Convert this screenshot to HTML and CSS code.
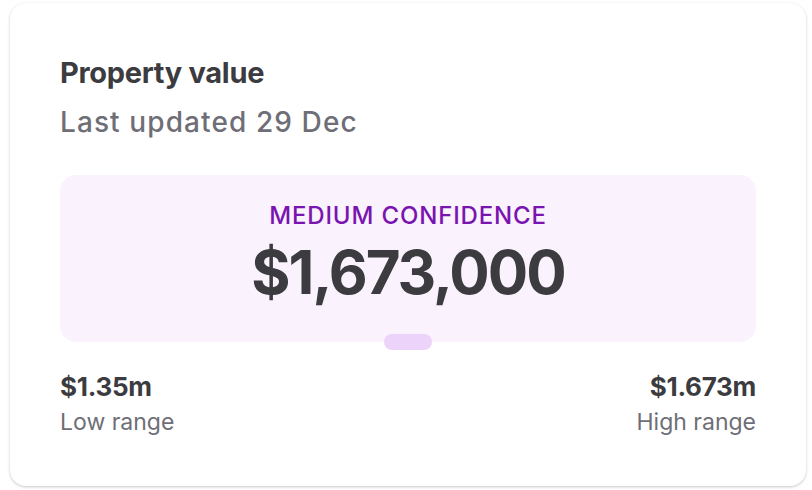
FILE: index.html
```html
<!DOCTYPE html>
<html>
<head>
<meta charset="utf-8">
<link rel="stylesheet" href="styles.css">
</head>
<body>
<div class="card">
  <h1 class="title">Property value</h1>
  <p class="subtitle">Last updated 29 Dec</p>
  <div class="estimate">
    <div class="confidence">MEDIUM CONFIDENCE</div>
    <div class="value">$1,673,000</div>
    <div class="pill"></div>
  </div>
  <div class="ranges">
    <div class="range">
      <div class="range-value">$1.35m</div>
      <div class="range-label">Low range</div>
    </div>
    <div class="range range-right">
      <div class="range-value">$1.673m</div>
      <div class="range-label">High range</div>
    </div>
  </div>
</div>
</body>
</html>
```
FILE: styles.css
```css
* { box-sizing: border-box; }
html, body { margin: 0; padding: 0; background: #ffffff; }
body {
  font-family: Inter, "Noto Sans", sans-serif;
  color: #3b3b40;
  padding: 3px 6px 4px 10px;
}
.card {
  width: 796px;
  height: 483px;
  background: #fff;
  border-radius: 16px;
  box-shadow: 0 1px 3px rgba(0,0,0,0.22);
  padding: 53px 50px 0 50px;
}
.title {
  margin: 0;
  font-size: 29px;
  font-weight: 700;
  letter-spacing: -0.3px;
  line-height: 34px;
}
.subtitle {
  margin: 15px 0 0 0;
  font-size: 28px;
  font-weight: 500;
  color: #6e6e76;
  line-height: 34px;
  letter-spacing: 1.1px;
}
.estimate {
  position: relative;
  margin-top: 36px;
  height: 167px;
  background: #faf2fd;
  border-radius: 16px;
  display: flex;
  flex-direction: column;
  align-items: center;
  padding-top: 27px;
}
.confidence {
  color: #7a14b0;
  font-size: 24px;
  font-weight: 500;
  letter-spacing: 0.85px;
  line-height: 28px;
}
.value {
  margin-top: 10px;
  font-size: 60px;
  font-weight: 700;
  line-height: 64px;
  letter-spacing: -2px;
}
.pill {
  position: absolute;
  left: 50%;
  bottom: -8px;
  transform: translateX(-50%);
  width: 48px;
  height: 16px;
  border-radius: 8px;
  background: #ecd3fa;
}
.ranges {
  display: flex;
  justify-content: space-between;
  margin-top: 30px;
}
.range-right { text-align: right; }
.range-value {
  font-size: 26px;
  font-weight: 700;
  line-height: 30px;
  letter-spacing: -0.3px;
}
.range-label {
  margin-top: 6px;
  font-size: 23px;
  color: #6e6e76;
  line-height: 28px;
}
```
